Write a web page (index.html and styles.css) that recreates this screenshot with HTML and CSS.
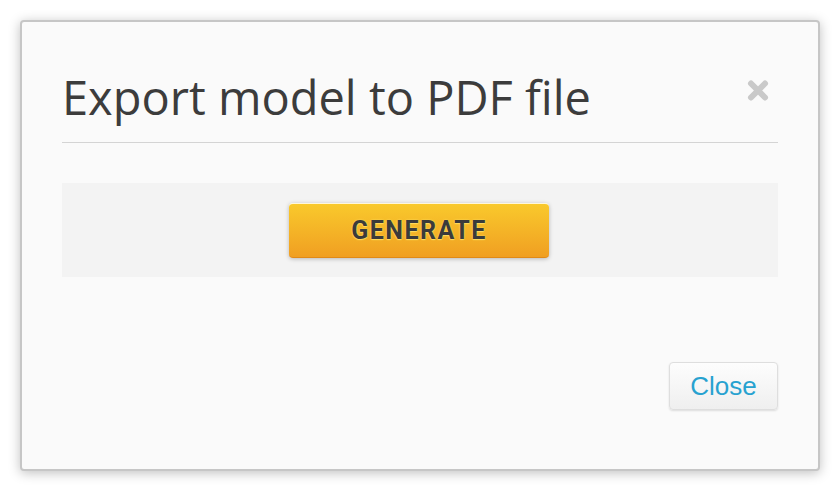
FILE: index.html
```html
<!DOCTYPE html>
<html>
<head>
<meta charset="utf-8">
<link rel="stylesheet" href="styles.css">
</head>
<body>
<div class="dialog">
  <div class="header">
    <h1 class="title">Export model to PDF file</h1>
    <button class="close-x" aria-label="Close">
      <svg width="22" height="21" viewBox="0 0 22 21"><path d="M4 3.5 L18 17.5 M18 3.5 L4 17.5" stroke="#c9c9c9" stroke-width="6" stroke-linecap="round"/></svg>
    </button>
  </div>
  <div class="panel">
    <button class="generate">GENERATE</button>
  </div>
  <div class="footer">
    <button class="close-btn">Close</button>
  </div>
</div>
</body>
</html>
```
FILE: styles.css
```css
html, body {
  margin: 0;
  padding: 0;
  background: #ffffff;
}
body {
  padding: 20px;
  width: 840px;
  height: 492px;
  box-sizing: border-box;
}
.dialog {
  width: 800px;
  height: 451px;
  box-sizing: border-box;
  background: #fafafa;
  border: 2px solid #c6c6c6;
  border-radius: 4px;
  box-shadow: 0 2px 12px rgba(0,0,0,0.25);
  padding: 0 40px;
  display: flex;
  flex-direction: column;
}
.header {
  height: 121px;
  box-sizing: border-box;
  border-bottom: 1px solid #d4d4d4;
  display: flex;
  justify-content: space-between;
  align-items: flex-start;
  padding-top: 47px;
}
.title {
  margin: 0;
  font-family: "Open Sans", sans-serif;
  font-weight: 400;
  font-size: 47px;
  line-height: 56px;
  color: #3c3c3c;
}
.close-x {
  border: 0;
  background: none;
  padding: 0;
  margin: 11px 9px 0 0;
  width: 22px;
  height: 21px;
  display: block;
}
.close-x svg { display: block; }
.panel {
  margin-top: 40px;
  height: 94px;
  background: #f3f3f3;
  display: flex;
  align-items: center;
  justify-content: center;
}
.generate {
  width: 260px;
  height: 55px;
  margin-left: -2px;
  border: 0;
  border-top: 1px solid #fff7da;
  border-bottom: 1px solid #e18a17;
  border-radius: 4px;
  background: linear-gradient(#f9c92c, #f09f22);
  box-shadow: 0 1px 4px rgba(0,0,0,0.25);
  font-family: "Roboto", sans-serif;
  font-weight: 700;
  font-size: 25px;
  letter-spacing: 1.5px;
  color: #3b3b3b;
  text-shadow: 0 0 2px #ffe36a, 0 1px 1px #ffd95a;
  padding: 0;
}
.footer {
  flex: 1;
  display: flex;
  justify-content: flex-end;
  align-items: flex-start;
  padding-top: 85px;
}
.close-btn {
  width: 109px;
  height: 48px;
  margin-right: 0;
  border: 1px solid #dedede;
  border-radius: 4px;
  background: linear-gradient(#fdfdfd, #efefef);
  box-shadow: 0 1px 2px rgba(0,0,0,0.12);
  font-family: "Liberation Sans", Arial, sans-serif;
  font-size: 26px;
  color: #27a2d0;
  padding: 0;
}
```
